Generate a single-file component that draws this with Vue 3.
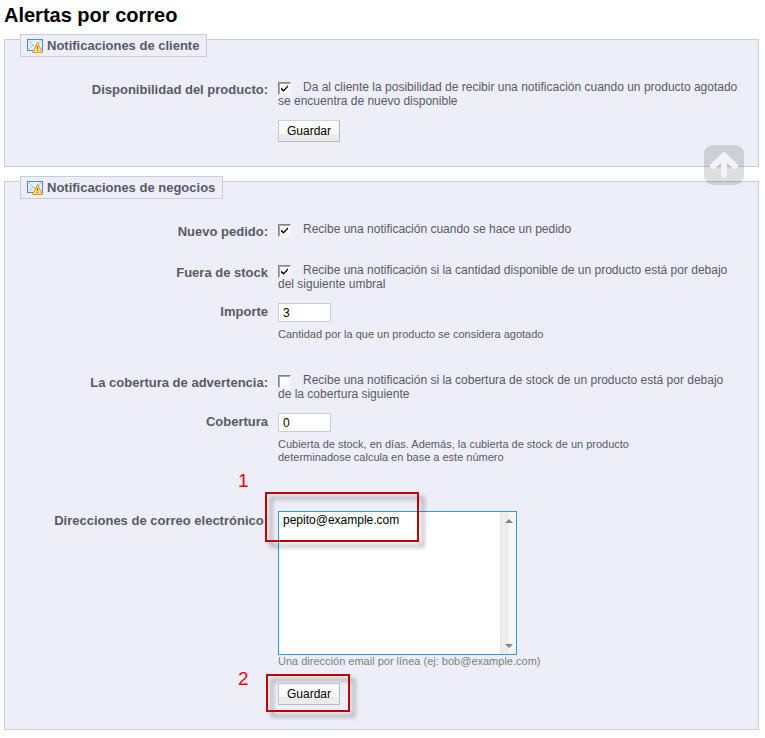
<script setup>
import { ref } from 'vue'

const available = ref(true)
const newOrder = ref(true)
const outOfStock = ref(true)
const coverage = ref(false)
const stockLimit = ref('3')
const coverageDays = ref('0')
const addresses = ref('pepito@example.com')
</script>

<template>
  <main class="page">
    <h1>Alertas por correo</h1>

    <form class="panel" @submit.prevent>
      <fieldset>
        <legend>
          <svg class="mail" viewBox="0 0 16 16" aria-hidden="true">
            <rect x="0.5" y="1.5" width="15" height="11" fill="#e6f1fb" stroke="#4a8ad6" />
            <path d="M1.5 2.5L7.5 8.5L14.5 2.5M1.5 11.5L6 7" fill="none" stroke="#9dbfe3" />
            <path d="M10.500 4.500L15.500 14.500H5.500Z" fill="#fbd977" stroke="#dd9a33" stroke-linejoin="round" />
            <path d="M10.500 8V11M10.500 12V13" stroke="#8a6420" />
          </svg>
          Notificaciones de cliente
        </legend>
        <div class="rows">
          <div class="row">
            <label class="name" for="available">Disponibilidad del producto:</label>
            <div class="field">
              <input id="available" v-model="available" type="checkbox" />
              <p>Da al cliente la posibilidad de recibir una notificación cuando un producto agotado<br />se encuentra de nuevo disponible</p>
            </div>
          </div>
          <div class="row actions">
            <div class="field"><button type="submit">Guardar</button></div>
          </div>
        </div>
      </fieldset>
    </form>

    <form class="panel" @submit.prevent>
      <fieldset>
        <legend>
          <svg class="mail" viewBox="0 0 16 16" aria-hidden="true">
            <rect x="0.5" y="1.5" width="15" height="11" fill="#e6f1fb" stroke="#4a8ad6" />
            <path d="M1.5 2.5L7.5 8.5L14.5 2.5M1.5 11.5L6 7" fill="none" stroke="#9dbfe3" />
            <path d="M10.500 4.500L15.500 14.500H5.500Z" fill="#fbd977" stroke="#dd9a33" stroke-linejoin="round" />
            <path d="M10.500 8V11M10.500 12V13" stroke="#8a6420" />
          </svg>
          Notificaciones de negocios
        </legend>
        <div class="rows">
          <div class="row single">
            <label class="name" for="new-order">Nuevo pedido:</label>
            <div class="field">
              <input id="new-order" v-model="newOrder" type="checkbox" />
              <p>Recibe una notificación cuando se hace un pedido</p>
            </div>
          </div>
          <div class="row">
            <label class="name" for="out-of-stock">Fuera de stock</label>
            <div class="field">
              <input id="out-of-stock" v-model="outOfStock" type="checkbox" />
              <p>Recibe una notificación si la cantidad disponible de un producto está por debajo<br />del siguiente umbral</p>
            </div>
          </div>
          <div class="row value">
            <label class="name" for="stock-limit">Importe</label>
            <div class="field">
              <input id="stock-limit" v-model="stockLimit" type="text" />
              <p class="help">Cantidad por la que un producto se considera agotado</p>
            </div>
          </div>
          <div class="row">
            <label class="name" for="coverage">La cobertura de advertencia:</label>
            <div class="field">
              <input id="coverage" v-model="coverage" type="checkbox" />
              <p>Recibe una notificación si la cobertura de stock de un producto está por debajo<br />de la cobertura siguiente</p>
            </div>
          </div>
          <div class="row value">
            <label class="name" for="coverage-days">Cobertura</label>
            <div class="field">
              <input id="coverage-days" v-model="coverageDays" type="text" />
              <p class="help">Cubierta de stock, en días. Además, la cubierta de stock de un producto<br />determinadose calcula en base a este número</p>
            </div>
          </div>
          <div class="row mails">
            <label class="name" for="addresses">Direcciones de correo electrónico:</label>
            <div class="field">
              <div class="area">
                <textarea id="addresses" v-model="addresses" spellcheck="false"></textarea>
                <div class="scroll" aria-hidden="true">
                  <svg viewBox="0 0 8 4"><path d="M0 4L4 0L8 4Z" fill="#858585" /></svg>
                  <svg viewBox="0 0 8 4"><path d="M0 0H8L4 4Z" fill="#858585" /></svg>
                </div>
              </div>
              <p class="help muted">Una dirección email por línea (ej: bob@example.com)</p>
              <span class="number first">1</span>
              <span class="frame frame-mail"></span>
            </div>
          </div>
          <div class="row actions">
            <div class="field">
              <button type="submit">Guardar</button>
              <span class="number second">2</span>
              <span class="frame frame-save"></span>
            </div>
          </div>
        </div>
      </fieldset>
    </form>

    <a class="to-top" href="#app" aria-label="Subir">
      <svg viewBox="0 0 40 40" aria-hidden="true">
        <path d="M20 30V12M9 21L20 10.500L31 21" fill="none" stroke="#f4f4f8" stroke-width="6" stroke-linecap="round" stroke-linejoin="round" />
      </svg>
    </a>
  </main>
</template>

<style>
body {
  margin: 0;
  background: #fff;
}
</style>

<style scoped>
.page {
  position: relative;
  padding: 4px 6px 8px 4px;
  font-family: "Liberation Sans", Arial, sans-serif;
  font-size: 12px;
  line-height: 14px;
  color: #585a69;
}
h1 {
  margin: 0 0 13px;
  font-size: 20px;
  line-height: 22px;
  color: #000;
}
p {
  margin: 0;
}
.panel + .panel {
  margin-top: 14px;
}
fieldset {
  min-width: 0;
  margin: 0;
  padding: 0 0 24px;
  border: 1px solid #ccccd6;
  background: #eeeef8;
}
legend {
  float: left;
  display: flex;
  align-items: center;
  gap: 4px;
  margin: -6px 0 0 15px;
  padding: 2px 7px 1px 6px;
  border: 1px solid #ccccd6;
  background: #eeeef8;
  font-size: 13px;
  font-weight: bold;
  line-height: 18px;
}
.mail {
  width: 16px;
  height: 16px;
}
.rows {
  clear: both;
  padding-top: 23px;
}
.row {
  display: grid;
  grid-template-columns: 263px 1fr;
  column-gap: 10px;
}
.single {
  margin-bottom: 27px;
}
.name {
  padding-top: 2px;
  font-size: 13px;
  font-weight: bold;
  line-height: 16px;
  text-align: right;
  white-space: nowrap;
}
.single .name {
  margin-bottom: -4px;
}
.field {
  position: relative;
  grid-column: 2;
}
input[type="checkbox"] {
  appearance: none;
  float: left;
  width: 13px;
  height: 13px;
  margin: 2px 12px -4px 0;
  border: 1px solid #fafafa;
  border-top-color: #858585;
  border-left-color: #858585;
  background: #fff;
  box-shadow: inset 1px 1px #a9a9a9, inset -1px -1px #eeeeee;
}
input[type="checkbox"]:checked::before {
  content: "";
  display: block;
  width: 7px;
  height: 7px;
  margin: 2px;
  background: #000;
  clip-path: polygon(0 36%, 36% 68%, 100% 4%, 100% 28%, 36% 96%, 0 64%);
}
input[type="text"] {
  display: block;
  box-sizing: border-box;
  width: 53px;
  height: 19px;
  margin: 0;
  padding: 0 4px;
  border: 1px solid #ccc;
  background: #fff;
  font: 12px/16px "Liberation Sans", Arial, sans-serif;
  color: #000;
}
.value {
  margin: 12px 0 32px;
}
.value .name {
  padding-top: 1px;
}
.help {
  margin-top: 6px;
  font-size: 11px;
  line-height: 13px;
}
.mails {
  margin-top: 47px;
}
.area {
  display: flex;
  box-sizing: border-box;
  width: 239px;
  height: 144px;
  border: 1px solid #3399dd;
  background: #fff;
}
textarea {
  flex: 1;
  min-width: 0;
  padding: 1px 4px;
  border: 0;
  outline: 0;
  resize: none;
  background: transparent;
  font: 12px/14px "Liberation Sans", Arial, sans-serif;
  color: #000;
}
.scroll {
  display: flex;
  flex-direction: column;
  justify-content: space-between;
  align-items: center;
  box-sizing: border-box;
  width: 16px;
  padding: 7px 0 6px;
  border-left: 1px solid #e3e3e3;
  background: linear-gradient(90deg, #eeeeee 6px, #e6e6e6 6px, #e6e6e6 7px, #f6f6f6 7px);
}
.scroll svg {
  width: 8px;
  height: 4px;
}
.muted {
  margin-top: 0;
  color: #7f7f7f;
}
.actions {
  margin-top: 12px;
}
.mails + .actions {
  margin-top: 15px;
}
button {
  display: block;
  box-sizing: border-box;
  width: 62px;
  height: 22px;
  padding: 0;
  border: 1px solid #b9b9b9;
  border-top-color: #d2d2d2;
  border-left-color: #c8c8c8;
  border-radius: 1px;
  background: linear-gradient(#fafafa 65%, #ececec 65%);
  font: 12px/16px "Liberation Sans", Arial, sans-serif;
  color: #000;
}
.number {
  position: absolute;
  left: -40px;
  font-size: 19px;
  line-height: 20px;
  color: #ff0000;
}
.first {
  top: -40px;
}
.second {
  top: -14px;
}
.frame {
  position: absolute;
  box-sizing: border-box;
  border: 2px solid #c00000;
  filter: drop-shadow(5px 5px 2px rgba(0, 0, 0, 0.4));
  pointer-events: none;
}
.frame-mail {
  top: -19px;
  left: -13px;
  width: 154px;
  height: 50px;
}
.frame-save {
  top: -9px;
  left: -12px;
  width: 84px;
  height: 38px;
}
.to-top {
  position: absolute;
  top: 145px;
  right: 21px;
  width: 40px;
  height: 40px;
  border-radius: 9px;
  background: rgba(0, 0, 0, 0.13);
}
.to-top svg {
  display: block;
}
</style>
